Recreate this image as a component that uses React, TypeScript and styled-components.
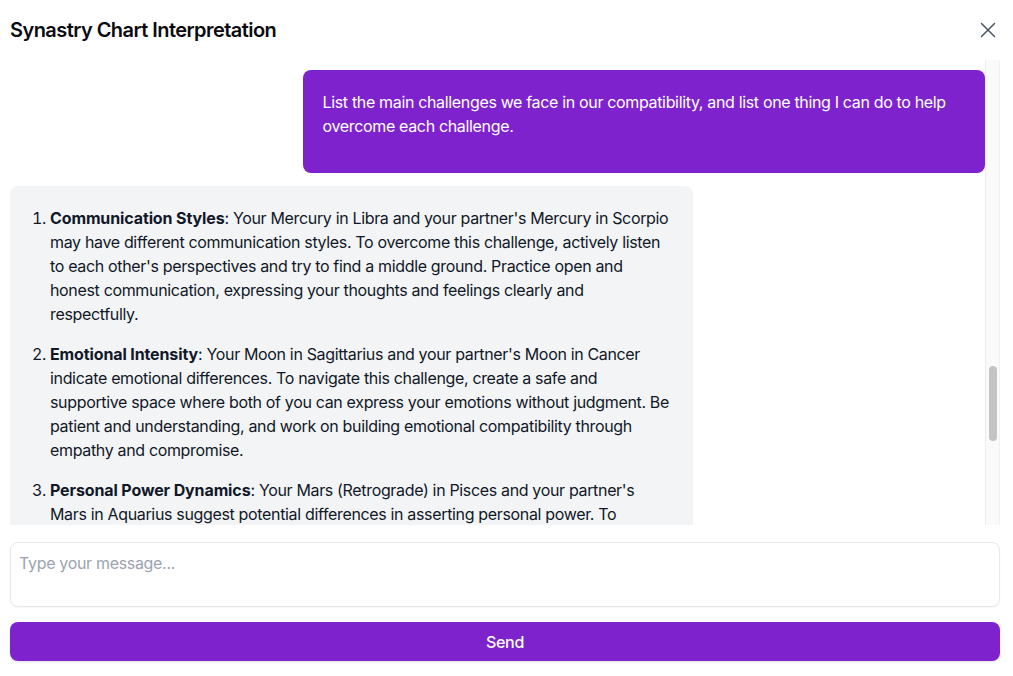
import React, { useLayoutEffect, useRef, useState } from "react";
import styled, { createGlobalStyle } from "styled-components";

const GlobalStyle = createGlobalStyle`
  html, body { margin: 0; padding: 0; background: #ffffff; }
  body { font-family: Inter, "Noto Sans", "Liberation Sans", sans-serif; color: #111827; letter-spacing: -0.34px; -webkit-font-smoothing: antialiased; }
  * { box-sizing: border-box; }
`;

const Modal = styled.div`
  width: 1013px;
  height: 676px;
  padding: 10px 13px 15px 10px;
  display: flex;
  flex-direction: column;
  background: #ffffff;
`;

const Header = styled.header`
  height: 40px;
  display: flex;
  align-items: center;
  justify-content: space-between;
  margin-bottom: 10px;
`;

const Title = styled.h2`
  margin: 0;
  font-size: 20px;
  font-weight: 600;
  letter-spacing: -0.55px;
  color: #0b0b0f;
`;

const CloseButton = styled.button`
  width: 24px;
  height: 24px;
  padding: 0;
  border: none;
  background: transparent;
  color: #4b5563;
  display: flex;
  align-items: center;
  justify-content: center;
  cursor: pointer;
`;

const ThreadFrame = styled.div`
  height: 465px;
  display: flex;
`;

const Thread = styled.div`
  flex: 1;
  min-width: 0;
  overflow-y: scroll;
  display: flex;
  flex-direction: column;
  gap: 13px;
  padding-bottom: 10px;
  scrollbar-width: none;
  &::-webkit-scrollbar { display: none; }
`;

const ScrollTrack = styled.div`
  position: relative;
  width: 15px;
  flex: none;
  background: #fafafa;
  border-left: 1px solid #ececec;
  border-right: 1px solid #f1f1f1;
`;

const ScrollThumb = styled.div`
  position: absolute;
  left: 3px;
  width: 8px;
  border-radius: 4px;
  background: #c4c4c4;
`;

const Bubble = styled.div<{ $user?: boolean }>`
  flex: none;
  max-width: 70%;
  align-self: ${(p) => (p.$user ? "flex-end" : "flex-start")};
  background: ${(p) => (p.$user ? "#7e22ce" : "#f3f4f6")};
  color: ${(p) => (p.$user ? "#ffffff" : "#111827")};
  border-radius: 8px;
  padding: 20px;
  font-size: 16px;
  line-height: 24px;
`;

const Para = styled.p`
  margin: 0 0 15px;
`;

const List = styled.ol`
  margin: 0 0 16px;
  padding-left: 20px;
  &:last-child { margin-bottom: 0; }
`;

const Item = styled.li`
  margin-bottom: 16px;
  &:last-child { margin-bottom: 0; }
  strong { font-weight: 700; letter-spacing: -0.12px; }
`;

const Composer = styled.textarea`
  margin-top: 17px;
  height: 65px;
  width: 100%;
  resize: none;
  border: 1px solid #e5e7eb;
  border-radius: 8px;
  box-shadow: 0 1px 2px rgba(0, 0, 0, 0.04);
  padding: 8px 8px;
  font-family: inherit;
  font-size: 16px;
  line-height: 24px;
  letter-spacing: -0.32px;
  color: #111827;
  outline: none;
  &::placeholder { color: #9ca3af; }
`;

const SendButton = styled.button`
  margin-top: 15px;
  height: 39px;
  width: 100%;
  border: none;
  border-radius: 8px;
  background: #7e22ce;
  color: #ffffff;
  font-family: inherit;
  font-size: 16px;
  font-weight: 500;
  letter-spacing: -0.32px;
  box-shadow: 0 1px 3px rgba(0, 0, 0, 0.12);
  cursor: pointer;
`;

type Entry = { title: string; body: string };
type Msg = { user: boolean; paras?: string[]; items?: Entry[]; outro?: string; target?: boolean };

const messages: Msg[] = [
  { user: true, paras: ["Give me an overview of our synastry chart and what it says about our relationship."] },
  {
    user: false,
    paras: [
      "Your synastry chart shows a relationship with a strong blend of emotional depth, intellectual curiosity and a shared desire for growth. Several of your personal planets form close aspects with your partner's, which suggests an immediate sense of recognition and familiarity between you.",
      "Your Sun in Gemini forms a harmonious trine to your partner's Sun in Libra, pointing to an easy flow of ideas, a love of conversation and a natural friendship at the core of the bond. Your Venus in Cancer conjunct your partner's Moon brings tenderness, nurturing and a deep wish to care for one another.",
      "At the same time, there are squares between your Moon and your partner's Mars, and between your Saturn and your partner's Venus. These aspects can create friction around emotional needs, timing and commitment, but they also give the relationship the motivation to mature and become more resilient over time.",
      "Overall, this is a connection that combines warmth and stimulation with a few important lessons. When both of you are willing to communicate openly and honor each other's differences, the chart suggests a partnership that can grow steadily stronger.",
    ],
  },
  { user: true, paras: ["How do our Moon signs interact, and what does that mean for our emotional life together?"] },
  {
    user: false,
    paras: [
      "Your Moon in Sagittarius and your partner's Moon in Cancer describe two quite different emotional languages. You tend to process feelings by moving, exploring and talking things through, while your partner tends to process feelings privately, needing time, closeness and reassurance before opening up.",
      "This contrast can be enriching. You bring optimism, humor and a sense of perspective when life feels heavy, and your partner brings warmth, loyalty and a deep capacity to remember what matters to you. Together you can create a home that feels both safe and alive.",
      "Friction may appear when you need space and your partner needs closeness at the same moment. Your partner may read your independence as distance, and you may experience their need for reassurance as pressure. Naming these needs out loud, without blame, goes a long way.",
      "Your partner's Moon also forms a trine to your Venus, which softens these differences. Small gestures of affection, shared meals and quiet time together will nourish your partner, while adventures, travel and learning new things together will nourish you.",
      "Pay attention to the rhythm of your days. Regular check-ins, even brief ones, help your partner feel connected, and leaving room for spontaneity helps you feel free. When both needs are respected, your emotional bond can become one of the most rewarding parts of the relationship.",
      "In short, your Moons ask you to become bilingual in each other's emotional language. With patience and curiosity, the differences become a source of balance rather than conflict.",
    ],
  },
  { user: true, paras: ["What are the strongest areas of compatibility between us?"] },
  {
    user: false,
    items: [
      { title: "Intellectual Connection", body: "Your Mercury trine your partner's Sun shows that you understand each other quickly and enjoy sharing ideas, plans and humor. Conversations tend to feel lively and energizing." },
      { title: "Emotional Nurturing", body: "Your Venus conjunct your partner's Moon creates a gentle, caring bond. You instinctively know how to comfort each other and make one another feel safe and appreciated." },
      { title: "Shared Values", body: "Your Jupiter sextile your partner's Venus points to similar values around generosity, adventure and personal growth. You encourage each other to expand your horizons." },
      { title: "Physical Chemistry", body: "Your Mars trine your partner's Venus adds warmth, attraction and a natural rhythm between you. Affection is expressed easily and openly." },
      { title: "Long-Term Potential", body: "Your Saturn sextile your partner's Sun suggests stability and loyalty. Over time, the relationship can provide a dependable foundation for both of your goals." },
    ],
  },
  { user: true, target: true, paras: ["List the main challenges we face in our compatibility, and list one thing I can do to help overcome each challenge."] },
  {
    user: false,
    items: [
      { title: "Communication Styles", body: "Your Mercury in Libra and your partner's Mercury in Scorpio may have different communication styles. To overcome this challenge, actively listen to each other's perspectives and try to find a middle ground. Practice open and honest communication, expressing your thoughts and feelings clearly and respectfully." },
      { title: "Emotional Intensity", body: "Your Moon in Sagittarius and your partner's Moon in Cancer indicate emotional differences. To navigate this challenge, create a safe and supportive space where both of you can express your emotions without judgment. Be patient and understanding, and work on building emotional compatibility through empathy and compromise." },
      { title: "Personal Power Dynamics", body: "Your Mars (Retrograde) in Pisces and your partner's Mars in Aquarius suggest potential differences in asserting personal power. To overcome this challenge, focus on cooperation rather than competition, and make decisions together whenever possible. Respect each other's independence while finding shared goals to work toward." },
      { title: "Commitment and Responsibility", body: "Your Saturn square your partner's Venus may bring moments of doubt or distance around commitment. To help, be consistent and reliable in small ways, and talk openly about your expectations for the future so that both of you feel secure." },
      { title: "Balancing Freedom and Closeness", body: "Your Uranus opposite your partner's Moon can create a push and pull between independence and togetherness. Give each other room to pursue individual interests, while also setting aside regular time to reconnect." },
      { title: "Different Approaches to Conflict", body: "Your Pluto square your partner's Mercury may make disagreements feel more intense than they need to be. When tension rises, take a short pause before responding, and return to the conversation once you both feel calm." },
    ],
    outro: "Remember that every relationship has challenges. By recognizing these patterns and working on them together with patience and kindness, you can turn them into opportunities for growth and a deeper connection.",
  },
];

const CloseIcon = () => (
  <svg width="16" height="16" viewBox="0 0 16 16" fill="none" stroke="currentColor" strokeWidth="1.5" strokeLinecap="round">
    <path d="M1.5 1.5L14.5 14.5M14.5 1.5L1.5 14.5" />
  </svg>
);

export default function App() {
  const threadRef = useRef<HTMLDivElement>(null);
  const targetRef = useRef<HTMLDivElement>(null);
  const [thumb, setThumb] = useState({ top: 0, height: 0 });

  const measure = () => {
    const t = threadRef.current;
    if (!t) return;
    const track = t.clientHeight;
    setThumb({
      top: (t.scrollTop / t.scrollHeight) * track,
      height: Math.max(20, (t.clientHeight / t.scrollHeight) * track),
    });
  };

  useLayoutEffect(() => {
    const t = threadRef.current;
    const m = targetRef.current;
    if (t && m) {
      t.scrollTop += m.getBoundingClientRect().top - t.getBoundingClientRect().top - 10;
    }
    measure();
  }, []);

  return (
    <>
      <GlobalStyle />
      <Modal>
        <Header>
          <Title>Synastry Chart Interpretation</Title>
          <CloseButton aria-label="Close">
            <CloseIcon />
          </CloseButton>
        </Header>
        <ThreadFrame>
          <Thread ref={threadRef} onScroll={measure}>
            {messages.map((m, i) => (
              <Bubble key={i} $user={m.user} ref={m.target ? targetRef : undefined}>
                {m.paras && m.paras.map((p, j) => <Para key={j}>{p}</Para>)}
                {m.items && (
                  <List>
                    {m.items.map((it, j) => (
                      <Item key={j}>
                        <strong>{it.title}</strong>: {it.body}
                      </Item>
                    ))}
                  </List>
                )}
                {m.outro && <Para>{m.outro}</Para>}
              </Bubble>
            ))}
          </Thread>
          <ScrollTrack>
            <ScrollThumb style={{ top: thumb.top, height: thumb.height }} />
          </ScrollTrack>
        </ThreadFrame>
        <Composer placeholder="Type your message..." />
        <SendButton>Send</SendButton>
      </Modal>
    </>
  );
}
